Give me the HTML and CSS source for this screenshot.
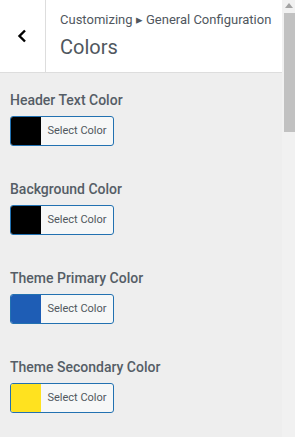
FILE: index.html
```html
<!DOCTYPE html>
<html lang="en">
<head>
  <meta charset="UTF-8" />
  <meta name="viewport" content="width=device-width, initial-scale=1" />
  <title>Colors</title>
  <link rel="stylesheet" href="styles.css">
</head>
<body>
  <div class="frame">
    <div class="panel">
      <div class="panel-head">
        <button class="back" aria-label="Back">
          <svg width="10" height="14" viewBox="0 0 10 14"><path d="M8 1.5 L2.5 7 L8 12.5" fill="none" stroke="#000" stroke-width="2.4"/></svg>
        </button>
        <div class="head-title">
          <span class="crumb">Customizing &#9656; General Configuration</span>
          <h2>Colors</h2>
        </div>
      </div>

      <ul class="controls">
        <li class="control">
          <span class="control-label">Header Text Color</span>
          <button class="color-btn"><span class="swatch" style="background:#000000"></span><span class="btn-text">Select Color</span></button>
        </li>
        <li class="control">
          <span class="control-label">Background Color</span>
          <button class="color-btn"><span class="swatch" style="background:#000000"></span><span class="btn-text">Select Color</span></button>
        </li>
        <li class="control">
          <span class="control-label">Theme Primary Color</span>
          <button class="color-btn"><span class="swatch" style="background:#1e5db5"></span><span class="btn-text">Select Color</span></button>
        </li>
        <li class="control">
          <span class="control-label">Theme Secondary Color</span>
          <button class="color-btn"><span class="swatch" style="background:#ffe21f"></span><span class="btn-text">Select Color</span></button>
        </li>
      </ul>
    </div>

    <!-- scrollbar of the customizer pane -->
    <div class="scrollbar">
      <span class="scroll-arrow"></span>
      <span class="scroll-thumb"></span>
    </div>
  </div>
</body>
</html>
```

FILE: styles.css
```css
html, body {
  margin: 0;
  height: 100%;
}
body {
  background: #eeeeee;
  font-family: Roboto, 'Noto Sans', sans-serif;
  overflow: hidden;
}
.frame {
  display: flex;
  height: 100%;
}
.panel {
  flex: 1;
  min-width: 0;
  overflow: hidden;
}
.panel-head {
  display: flex;
  background: #ffffff;
  border-bottom: 1px solid #dddddd;
  height: 72px;
}
.back {
  width: 46px;
  border: none;
  border-right: 1px solid #dddddd;
  background: #ffffff;
  padding: 0;
  display: flex;
  align-items: center;
  justify-content: center;
  cursor: pointer;
}
.back svg {
  margin-right: 2px;
}
.head-title {
  padding: 10px 0 0 14px;
  white-space: nowrap;
}
.crumb {
  display: block;
  font-size: 13px;
  color: #50575e;
  line-height: 20px;
}
h2 {
  margin: 4px 0 0;
  font-size: 20px;
  font-weight: 400;
  color: #50575e;
  line-height: 26px;
}
.controls {
  list-style: none;
  margin: 0;
  padding: 17px 10px 0;
}
.control {
  display: flex;
  flex-direction: column;
  align-items: flex-start;
  margin-bottom: 33px;
}
.control-label {
  font-size: 14px;
  font-weight: 500;
  color: #555d66;
  line-height: 20px;
  margin-bottom: 6px;
}
.color-btn {
  display: flex;
  align-items: stretch;
  width: 104px;
  height: 30px;
  padding: 0;
  border: 1px solid #2271b1;
  border-radius: 3px;
  background: #f6f7f7;
  overflow: hidden;
  cursor: pointer;
}
.swatch {
  width: 30px;
}
.btn-text {
  flex: 1;
  font-family: Roboto, sans-serif;
  font-size: 11px;
  color: #50575e;
  line-height: 28px;
  text-align: center;
}
.scrollbar {
  width: 13px;
  background: #f1f1f1;
  display: flex;
  flex-direction: column;
  align-items: flex-end;
}
.scroll-arrow {
  align-self: center;
  margin: 3px 0 5px 1px;
  width: 0;
  height: 0;
  border-left: 4px solid transparent;
  border-right: 4px solid transparent;
  border-bottom: 5px solid #a3a3a3;
}
.scroll-thumb {
  width: 11px;
  height: 119px;
  background: #c1c1c1;
}
```
